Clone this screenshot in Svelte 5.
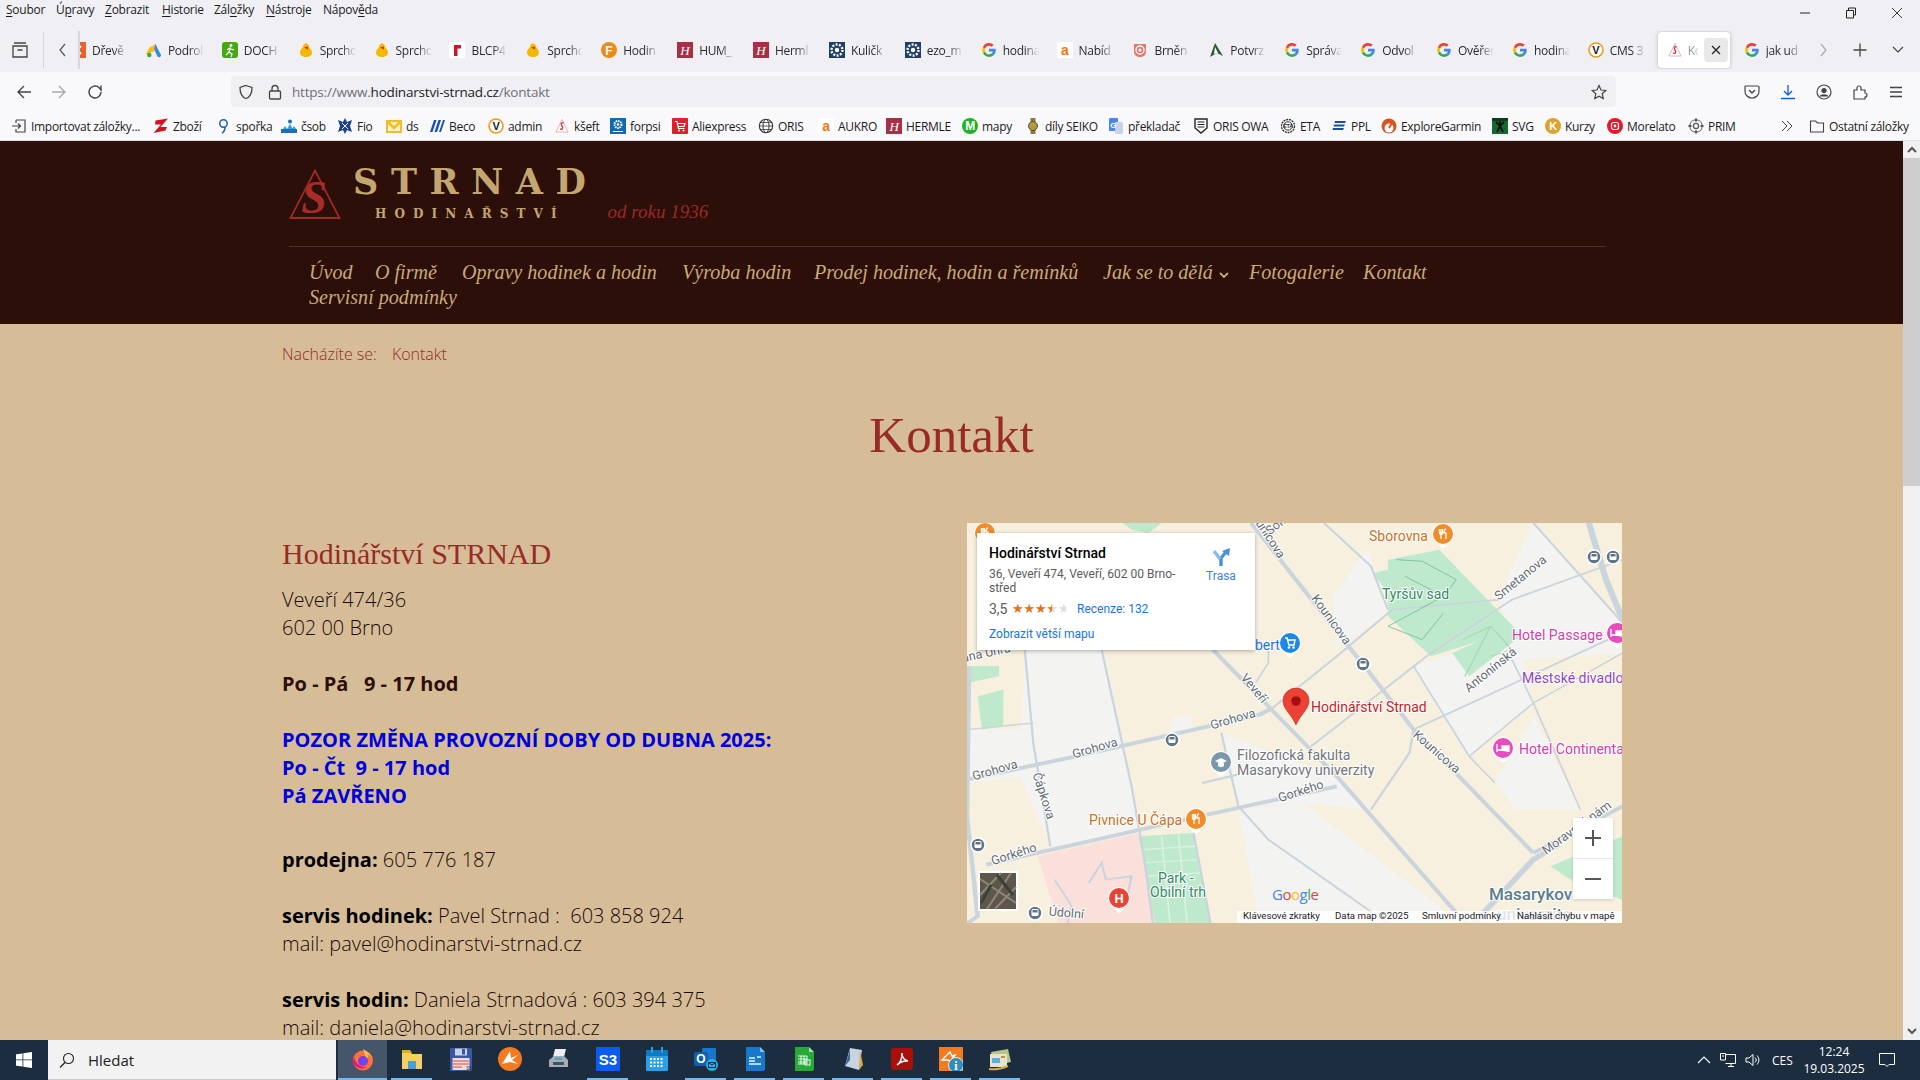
<script>
  const icons = {
    drev: '<rect width="16" height="16" fill="#e8622a"/><path d="M3 4l8 8M11 4l-8 8" stroke="#fff" stroke-width="2"/>',
    ads: '<path d="M9.500 2L15 13a2 2 0 0 1-3.500 1.600L6.500 4.500z" fill="#3c8bd9"/><path d="M6.500 4.500l3-2.500-2 8-3 0z" fill="#fabb05"/><path d="M6 5L1.500 12.500" stroke="#fabb05" stroke-width="3.400"/><circle cx="3.300" cy="13" r="2.200" fill="#34a853"/>',
    doch: '<rect width="16" height="16" rx="3" fill="#46a80f"/><circle cx="9" cy="3.500" r="1.400" fill="#fff"/><path d="M8.500 5.500L7 10l3 2 -1 3M7.500 6L5 8M9 7l3 1M7 10l-3 3" stroke="#fff" stroke-width="1.300" fill="none"/>',
    duck: '<path d="M8 1c1.500 1 3 1.600 3 3.500 0 1.500 3 3 3 6 0 3-2.500 4.500-6 4.500s-6-1.500-6-4.500c0-3 3-4.500 3-6C5 2.600 6.500 2 8 1z" fill="#f5b800"/><path d="M6 5.500l4-1 0 3z" fill="#d22"/>',
    blcp: '<rect width="16" height="16" fill="#fff"/><path d="M5 14V3h7v3.500H8.500V14z" fill="#d0122a"/>',
    hodf: '<circle cx="8" cy="8" r="8" fill="#ee8a1c"/><text x="8" y="12.500" font-size="12" font-weight="700" text-anchor="middle" fill="#fff" font-family="Liberation Sans">F</text>',
    herm: '<rect width="16" height="16" fill="#a82f45"/><text x="8" y="12.500" font-size="13" font-style="italic" text-anchor="middle" fill="#fff" font-family="Liberation Serif">H</text>',
    kul: '<rect width="16" height="16" fill="#1f3f68"/><circle cx="8" cy="8" r="5.500" fill="none" stroke="#fff" stroke-width="2.400" stroke-dasharray="2 1.400"/><circle cx="8" cy="8" r="2.200" fill="#fff"/>',
    g: '<path d="M14.700 8.200c0-.500 0-1-.100-1.400H8v2.700h3.800c-.200.900-.700 1.600-1.400 2.100l2.200 1.700c1.300-1.200 2.100-3 2.100-5.100z" fill="#4285f4"/><path d="M8 15c1.900 0 3.400-.600 4.600-1.700l-2.200-1.700c-.600.400-1.400.700-2.400.700-1.800 0-3.400-1.200-3.900-2.900L1.800 11.100C3 13.400 5.300 15 8 15z" fill="#34a853"/><path d="M4.100 9.400a4 4 0 0 1 0-2.800L1.800 4.900a7 7 0 0 0 0 6.200z" fill="#fbbc05"/><path d="M8 3.700c1 0 2 .400 2.700 1l2-2A7 7 0 0 0 1.800 4.900l2.300 1.700C4.600 4.900 6.200 3.700 8 3.700z" fill="#ea4335"/>',
    aura: '<rect width="16" height="16" fill="#fff"/><text x="8" y="13" font-size="14" font-weight="700" text-anchor="middle" fill="#f07810" font-family="Liberation Sans">a</text>',
    brn: '<path d="M2 2h12v8c0 3-3 5-6 5s-6-2-6-5z" fill="#e8776b"/><circle cx="8" cy="8" r="4" fill="none" stroke="#fff" stroke-width="1.400"/><circle cx="8" cy="8" r="1.600" fill="#fff"/>',
    pot: '<path d="M7 1l8 13-6-3-7 4z" fill="#2f5b33"/><path d="M7 5l3 6-4 1z" fill="#fff"/>',
    v: '<circle cx="8" cy="8" r="7" fill="#fff" stroke="#ee9a1c" stroke-width="1.600"/><text x="8" y="12" font-size="11" font-weight="700" text-anchor="middle" fill="#222" font-family="Liberation Sans">V</text>',
    str: '<path d="M8 1.500l6 12.500H2z" fill="#fff" stroke="#e8a0a2" stroke-width=".8"/><path d="M9.500 5c-2-1-3 1-1.500 3s.500 4-2 3" fill="none" stroke="#c8484a" stroke-width="1.500"/>',
    imp: '<path d="M5 2h9v12H5v-3M5 5V2M1 8h8M7 5.500L9.500 8 7 10.500" fill="none" stroke="#444" stroke-width="1.200"/>',
    z: '<path d="M2.500 2.500L15 .5 7.500 9H14l-1.500 3.500L.5 15 8 6.500H2z" fill="#d0121c"/>',
    pin: '<circle cx="7.500" cy="5.500" r="3.700" fill="none" stroke="#1c5fb0" stroke-width="1.500"/><path d="M9 9c0 3-1 5-3 6" fill="none" stroke="#1c5fb0" stroke-width="1.500"/>',
    csob: '<path d="M0 11h16v4H0z" fill="#1d70b8"/><path d="M2 11l2-3 2 3M6 11l3-5 3 5M11 11l2-3 2 3" fill="#39a0dc"/><circle cx="9" cy="3.500" r="2" fill="#1d70b8"/>',
    fio: '<path d="M8 0l2 4 5-2-2 6 2 6-5-2-2 4-2-4-5 2 2-6-2-6 5 2z" fill="#1c3f94"/><path d="M5 5l6 6M11 5l-6 6" stroke="#fff"/>',
    ds: '<path d="M1 3h14v11H1z" fill="#fff2c8" stroke="#f4bd27" stroke-width="2"/><path d="M1 3l7 7 7-7" fill="none" stroke="#f4bd27" stroke-width="2.600"/>',
    beco: '<path d="M1 14L5 2h2.500L3.500 14zM5.500 14L9.500 2H12L8 14zM10 14l4-12h2l-4 12z" fill="#1b4fb0"/>',
    forp: '<rect width="16" height="16" fill="#1268b8"/><circle cx="8" cy="6.500" r="3.500" fill="none" stroke="#fff" stroke-width="2" stroke-dasharray="1.500 .8"/><circle cx="8" cy="6.500" r="1.200" fill="#fff"/><path d="M3 13.500h10" stroke="#fff"/>',
    ali: '<rect width="16" height="16" rx="1" fill="#d8232a"/><path d="M3 3.500h2l1.500 7h6M6 5.500h7l-1 3H6.500" fill="none" stroke="#fff" stroke-width="1.200"/><circle cx="7" cy="12.500" r="1" fill="#fff"/><circle cx="11.500" cy="12.500" r="1" fill="#fff"/>',
    globe: '<circle cx="8" cy="8" r="6.700" fill="none" stroke="#3a3a3a" stroke-width="1.100"/><ellipse cx="8" cy="8" rx="3" ry="6.700" fill="none" stroke="#3a3a3a"/><path d="M1.500 8h13M2.500 4.500h11M2.500 11.500h11" stroke="#3a3a3a" stroke-width=".8"/>',
    mapy: '<circle cx="8" cy="8" r="8" fill="#1cb324"/><text x="8" y="12.300" font-size="12" font-weight="700" text-anchor="middle" fill="#fff" font-family="Liberation Sans">M</text>',
    watch: '<rect x="5.500" y="0" width="5" height="16" fill="#8a7a3c"/><circle cx="8" cy="8" r="4.500" fill="#b09a48" stroke="#5c5020"/>',
    trans: '<rect x="1" y="0" width="9" height="13" rx="1" fill="#4a87ec"/><rect x="7" y="4" width="8" height="12" rx="1" fill="#c4d4ee"/><text x="5.200" y="9.500" font-size="8" font-weight="700" text-anchor="middle" fill="#fff" font-family="Liberation Sans">G</text>',
    owa: '<path d="M2 1h12v9l-6 5-6-5z" fill="#fff" stroke="#222" stroke-width="1.400"/><path d="M4.500 4h7M4.500 6.500h7M4.500 9h7" stroke="#222" stroke-width="1.200"/>',
    eta: '<circle cx="8" cy="8" r="6.500" fill="#fff" stroke="#333" stroke-width="1.400" stroke-dasharray="2 .8"/><circle cx="8" cy="8" r="4.200" fill="none" stroke="#333"/><text x="8" y="10" font-size="5.500" font-weight="700" text-anchor="middle" fill="#333" font-family="Liberation Sans">ETA</text>',
    ppl: '<path d="M4 3h11l-1 2H3.500zM3 6.500h11l-1 2H2.500zM2 10h11l-1 2H1.500z" fill="#1a4f9e"/>',
    garm: '<circle cx="8" cy="8" r="7.500" fill="#d9531e"/><circle cx="8" cy="10" r="4.500" fill="#fff"/><path d="M8 10l3-5" stroke="#d9531e" stroke-width="2"/>',
    svg: '<rect width="16" height="16" fill="#136b32"/><path d="M8 2.500v5M4 4l4 4 4-4M8 8l-3 6M8 8l3 6" stroke="#111" stroke-width="1.800" fill="none"/><rect x="0" y="0" width="16" height="3" fill="#0c3a1c"/>',
    kur: '<circle cx="8" cy="8" r="8" fill="#d9a431"/><text x="8" y="12.300" font-size="11" font-weight="700" text-anchor="middle" fill="#fff" font-family="Liberation Sans">K</text>',
    mor: '<circle cx="8" cy="8" r="8" fill="#e4192b"/><rect x="4.500" y="4.500" width="7" height="7" rx="2" fill="none" stroke="#fff" stroke-width="1.200"/><circle cx="8" cy="8" r="1.400" fill="#fff"/>',
    prim: '<circle cx="8" cy="8" r="2.600" fill="none" stroke="#555" stroke-width="1.200"/><path d="M8 .5v3M8 12.500v3M.5 8h3M12.500 8h3" stroke="#555" stroke-width="2"/><rect x="2" y="2" width="12" height="12" rx="5" fill="none" stroke="#555" stroke-width=".9"/>'
  }

  const menu = [
    { t: 'Soubor', u: 0, w: 50 }, { t: 'Úpravy', u: 1, w: 49 }, { t: 'Zobrazit', u: 0, w: 57 },
    { t: 'Historie', u: 0, w: 52 }, { t: 'Záložky', u: 3, w: 52 }, { t: 'Nástroje', u: 0, w: 57 }, { t: 'Nápověda', u: 5, w: 60 }
  ]

  const tabs = [
    ['drev', 'Dřevě'], ['ads', 'Podrol'], ['doch', 'DOCH'], ['duck', 'Sprcho'], ['duck', 'Sprcho'],
    ['blcp', 'BLCP4'], ['duck', 'Sprcho'], ['hodf', 'Hodin'], ['herm', 'HUM_'], ['herm', 'Herml'],
    ['kul', 'Kuličk'], ['kul', 'ezo_m'], ['g', 'hodina'], ['aura', 'Nabíd'], ['brn', 'Brněn'],
    ['pot', 'Potvrz'], ['g', 'Správa'], ['g', 'Odvol'], ['g', 'Ověřen'], ['g', 'hodina'], ['v', 'CMS 3']
  ]

  const bookmarks = [
    ['imp', 'Importovat záložky...', 142], ['z', 'Zboží', 63], ['pin', 'spořka', 65], ['csob', 'čsob', 56], ['fio', 'Fio', 49],
    ['ds', 'ds', 43], ['beco', 'Beco', 59], ['v', 'admin', 66], ['str', 'kšeft', 56], ['forp', 'forpsi', 62],
    ['ali', 'Aliexpress', 86], ['globe', 'ORIS', 60], ['aura', 'AUKRO', 68], ['herm', 'HERMLE', 76], ['mapy', 'mapy', 63],
    ['watch', 'díly SEIKO', 83], ['trans', 'překladač', 85], ['owa', 'ORIS OWA', 87], ['eta', 'ETA', 51], ['ppl', 'PPL', 50],
    ['garm', 'ExploreGarmin', 111], ['svg', 'SVG', 53], ['kur', 'Kurzy', 62], ['mor', 'Morelato', 81], ['prim', 'PRIM', 60]
  ]

  const navItems = [
    ['Úvod', 66], ['O firmě', 87], ['Opravy hodinek a hodin', 220], ['Výroba hodin', 132],
    ['Prodej hodinek, hodin a řemínků', 289], ['Jak se to dělá', 146], ['Fotogalerie', 114], ['Kontakt', 70], ['Servisní podmínky', 200]
  ]

  const apps = [
    { k: 'ff', on: 1, cur: 1 }, { k: 'folder', on: 1 }, { k: 'floppy' }, { k: 'avast' }, { k: 'printer' }, { k: 's3', on: 1 },
    { k: 'cal' }, { k: 'outlook', on: 1 }, { k: 'writer', on: 1 }, { k: 'calc', on: 1 }, { k: 'note', on: 1 }, { k: 'pdf', on: 1 },
    { k: 'avinfo', on: 1 }, { k: 'mailer', on: 1 }
  ]

  const appIcons = {
    ff: '<circle cx="12" cy="13.500" r="10" fill="#ff7139"/><path d="M12 2c3 2 8 4 9.500 11-1-3-3-5-5-6 1 2 .5 4-1 5z" fill="#ffbd4f"/><circle cx="12" cy="14" r="5" fill="#7542e5"/><path d="M3 9c1 7 6 12 13 11-5 3-12 1-14-5z" fill="#e31587"/>',
    folder: '<path d="M2 5h8l2 2h10v15H2z" fill="#f7cf6a"/><path d="M2 3h8l2 3H2z" fill="#e0a82e"/><path d="M8 14h8v8H8z" fill="#4a9fd8"/>',
    floppy: '<rect x="1" y="1" width="22" height="23" rx="1" fill="#3857a5"/><rect x="6" y="1.500" width="12" height="7" fill="#c9d3ea"/><rect x="13" y="2" width="3" height="5.500" fill="#3857a5"/><rect x="3.500" y="11" width="17" height="12" fill="#f1dada"/><path d="M4 14h16M4 17h16M4 20h9" stroke="#d84a4a"/><text x="17" y="22.500" font-size="5" fill="#222" font-family="Liberation Sans">31</text>',
    avast: '<circle cx="12" cy="12" r="12" fill="#f37a1f"/><path d="M4 17L12 4l1 7 7-3-6 5 6 4-8-2z" fill="#fff"/>',
    printer: '<path d="M8 2h11l-2 8H6z" fill="#eee"/><path d="M2 13l5-4h10l4 4v7H2z" fill="#a4aeb8"/><rect x="6" y="15" width="11" height="3" fill="#46525e"/><rect x="8" y="10.500" width="7" height="2.500" fill="#5da0c8"/>',
    s3: '<rect width="24" height="24" fill="#0a5cf5"/><text x="12" y="17.500" font-size="15" font-weight="700" text-anchor="middle" fill="#fff" font-family="Liberation Sans">S3</text>',
    cal: '<rect x="1" y="3" width="22" height="21" rx="1" fill="#2aa0e8"/><rect x="1" y="3" width="22" height="6" fill="#0e7ac4"/><path d="M7 0v6M17 0v6" stroke="#2aa0e8" stroke-width="2"/><path d="M5 12h14M5 15.500h14M5 19h14" stroke="#fff" stroke-width="1.800" stroke-dasharray="2 1.500"/>',
    outlook: '<rect x="8" y="1" width="14" height="15" rx="1" fill="#1777cb"/><rect x="0" y="5" width="14" height="14" rx="2" fill="#0f5fb0"/><text x="7" y="16" font-size="12" font-weight="700" text-anchor="middle" fill="#fff" font-family="Liberation Sans">O</text><circle cx="18" cy="18" r="6" fill="#27b0e4"/><rect x="14.500" y="15.500" width="7" height="5" fill="none" stroke="#103050"/><path d="M14.500 15.500l3.500 2.500 3.500-2.500" fill="none" stroke="#103050"/>',
    writer: '<path d="M3 0h14l5 5v17a2 2 0 0 1-2 2H3z" fill="#1878cc"/><path d="M17 0l5 5h-5z" fill="#7dc0ee"/><path d="M6 11h6M6 14h6M14 10h4M6 17h12" stroke="#e8f2fb" stroke-width="1.400"/>',
    calc: '<path d="M3 0h14l5 5v17a2 2 0 0 1-2 2H3z" fill="#27a838"/><path d="M17 0l5 5h-5z" fill="#a0e0a0"/><path d="M6 9h9v8H6M6 12h9M6 15h9M9 9v8M12 9v8" stroke="#e8fae8" fill="none"/><rect x="13" y="13" width="5" height="5" fill="none" stroke="#e8fae8"/>',
    note: '<path d="M9 1l12 2-3 20L4 19z" fill="#c8d4e0"/><path d="M4 19L9 3v10z" fill="#3e6a8c"/><path d="M19 3l3 15-4 5z" fill="#d8a94a"/>',
    pdf: '<rect x="1" y="1" width="22" height="22" rx="3" fill="#ab0f0a"/><path d="M7 18c3-2 5-7 5-12 0 5 2 7 6 8-5-.5-8 1-11 4z" fill="none" stroke="#fff" stroke-width="1.500"/>',
    avinfo: '<rect width="24" height="24" fill="#f37a1f"/><path d="M3 13l8-8 2 4 3-1-4 6-4-1z" fill="none" stroke="#fff" stroke-width="1.400"/><circle cx="17" cy="18" r="7.500" fill="#2b8fc4" stroke="#fff" stroke-width=".8"/><text x="17" y="23" font-size="12" font-weight="700" text-anchor="middle" fill="#fff" font-family="Liberation Serif">i</text>',
    mailer: '<path d="M3 5l17-3 3 13-17 4z" fill="#b9c48a"/><rect x="2" y="7" width="17" height="13" fill="#e8e4c8"/><rect x="4" y="11" width="8" height="5" fill="#5ab0e0"/><path d="M13 10h4" stroke="#c84" stroke-width="2"/><path d="M1 22c6 1 12 0 19-3" stroke="#d8a94a" stroke-width="2" fill="none"/>'
  }

  const roads = [
    { p: '590,400 720,570 880,780 1160,1190 1190,1230', w: 5 },
    { p: '680,20 760,150 945,450 1060,640 1340,1010', w: 5 },
    { p: '15,790 270,720 700,595 730,575', w: 5.500 },
    { p: '60,1045 560,900 880,810', w: 5.500 },
    { p: '1340,1010 1549,870', w: 5 },
    { p: '1200,1222 1340,1030 1400,985', w: 7 },
    { p: '1470,20 1510,190 1549,310', w: 7 },
    { p: '720,585 880,420 1010,280 1260,250', w: 2.500 },
    { p: '820,690 1090,420 1290,250 1549,130', w: 2.500 },
    { p: '1060,640 1330,480 1549,350', w: 2.500 },
    { p: '960,880 1050,710 1060,640', w: 2.500 },
    { p: '1060,450 1190,720 1250,800', w: 2 },
    { p: '1290,430 1340,560 1450,880', w: 2 },
    { p: '1190,720 1340,560 1549,410', w: 2 },
    { p: '150,400 170,680 210,990', w: 2.500 },
    { p: '330,400 400,810 430,1030 450,1222', w: 2.500 },
    { p: '610,650 650,870 720,970 1000,1222', w: 2.500 },
    { p: '545,950 585,1222', w: 2.500 },
    { p: '15,640 170,620', w: 2 },
    { p: '20,450 15,900 40,1200 15,1222', w: 5 },
    { p: '565,800 650,775', w: 3 },
    { p: '850,20 960,150 1000,280', w: 2.500 },
    { p: '1340,20 1549,320', w: 2.500 },
    { p: '690,500 720,440 720,400', w: 2 },
    { p: '300,1100 330,1040 340,1090 400,1080 390,1140', w: 2.500 },
    { p: '220,1090 260,1170 250,1222', w: 2 }
  ]

  const labels = [
    { t: 'unicova', x: 300, y: 18, r: 57 }, { t: 'Sok', x: 311, y: 6, r: -38 }, { t: 'Kounicova', x: 361, y: 99, r: 54 },
    { t: 'Kounicova', x: 467, y: 232, r: 41 }, { t: 'Veveří', x: 284, y: 168, r: 50 }, { t: 'Grohova', x: 267, y: 200, r: -16 },
    { t: 'Grohova', x: 129, y: 229, r: -16 }, { t: 'Grohova', x: 29, y: 251, r: -16 }, { t: 'Gorkého', x: 335, y: 272, r: -18 },
    { t: 'Gorkého', x: 48, y: 335, r: -18 }, { t: 'Čápkova', x: 73, y: 274, r: 72 }, { t: 'Antonínská', x: 526, y: 150, r: -39 },
    { t: 'Smetanova', x: 556, y: 58, r: -39 }, { t: 'Moravské nám', x: 612, y: 308, r: -36 }, { t: 'ana Uhra', x: 20, y: 134, r: -12 },
    { t: 'Údolní', x: 99, y: 394, r: 5 }
  ]

  const places = [
    { t: 'Sborovna', x: 402, y: 18, c: '#c8701c' }, { t: 'Tyršův sad', x: 415, y: 76, c: '#2f8a5f' },
    { t: 'Hotel Passage', x: 545, y: 117, c: '#d440a8' }, { t: 'Městské divadlo', x: 555, y: 160, c: '#8f45c8' },
    { t: 'Hodinářství Strnad', x: 344, y: 189, c: '#c5221f' }, { t: 'Filozofická fakulta', x: 270, y: 237, c: '#70757a' },
    { t: 'Masarykovy univerzity', x: 270, y: 252, c: '#70757a' }, { t: 'Hotel Continental', x: 552, y: 231, c: '#d440a8' },
    { t: 'Pivnice U Čápa', x: 122, y: 302, c: '#c8701c' }, { t: 'Park -', x: 191, y: 360, c: '#2f8a5f' },
    { t: 'Obilní trh', x: 183, y: 374, c: '#2f8a5f' }, { t: 'bert', x: 288, y: 127, c: '#1a73e8' }
  ]

  const buses = [[396, 141], [205, 217], [11, 322], [68, 390], [627, 34], [646, 34]]

  const pins = [
    { x: 476, y: 11, c: '#f28c28', g: 'food' }, { x: 229, y: 296, c: '#f28c28', g: 'food' }, { x: 18, y: 10, c: '#f28c28', g: 'food' },
    { x: 323, y: 120, c: '#1e88e5', g: 'cart' }, { x: 536, y: 225, c: '#e84dc0', g: 'bed' }, { x: 650, y: 110, c: '#e84dc0', g: 'bed' },
    { x: 254, y: 239, c: '#7b98a8', g: 'uni' }, { x: 152, y: 375, c: '#ea4335', g: 'h' }
  ]
</script>

{#snippet fav(k)}
  <svg class="fav" viewBox="0 0 16 16">{@html icons[k]}</svg>
{/snippet}

<div class="screen">
  <div class="menubar">
    {#each menu as m}
      <span class="menu-item" style="width: {m.w}px">{m.t.slice(0, m.u)}<u>{m.t[m.u]}</u>{m.t.slice(m.u + 1)}</span>
    {/each}
    <div class="win-controls">
      <svg width="12" height="12" viewBox="0 0 12 12"><path d="M1 6h10" stroke="#222"/></svg>
      <svg width="12" height="12" viewBox="0 0 12 12"><path d="M3.500 3V1h7v7H8.500M1.500 3.500h7v7.500h-7z" fill="none" stroke="#222"/></svg>
      <svg width="12" height="12" viewBox="0 0 12 12"><path d="M1 1l10 10M11 1L1 11" stroke="#222" stroke-width=".9"/></svg>
    </div>
  </div>

  <div class="tabbar">
    <svg class="fxview" width="18" height="18" viewBox="0 0 18 18"><path d="M3 2h12M2 5h14v11H2zM6.500 9h5" fill="none" stroke="#444" stroke-width="1.300"/></svg>
    <div class="tab-sep"></div>
    <svg class="tab-scroll" width="10" height="16" viewBox="0 0 10 16"><path d="M8 2L3 8l5 6" fill="none" stroke="#555" stroke-width="1.200"/></svg>
    <div class="tabs">
      {#each tabs as t}
        <div class="tab">{@render fav(t[0])}<span class="tab-label">{t[1]}</span></div>
      {/each}
      <div class="tab active">
        {@render fav('str')}
        <span class="tab-label">Ko</span>
        <span class="tab-close"><svg width="10" height="10" viewBox="0 0 10 10"><path d="M1 1l8 8M9 1L1 9" stroke="#222" stroke-width="1.300"/></svg></span>
      </div>
      <div class="tab last">{@render fav('g')}<span class="tab-label">jak ud</span></div>
    </div>
    <svg class="tab-next" width="10" height="16" viewBox="0 0 10 16"><path d="M2 2l5 6-5 6" fill="none" stroke="#aaa" stroke-width="1.200"/></svg>
    <svg class="tab-plus" width="14" height="14" viewBox="0 0 14 14"><path d="M7 .5v13M.5 7h13" stroke="#444" stroke-width="1.300"/></svg>
    <svg class="tab-list" width="12" height="8" viewBox="0 0 12 8"><path d="M1 1l5 5 5-5" fill="none" stroke="#444" stroke-width="1.200"/></svg>
  </div>

  <div class="toolbar">
    <svg class="tb back" width="16" height="16" viewBox="0 0 16 16"><path d="M15 8H2M8 2L2 8l6 6" fill="none" stroke="#444" stroke-width="1.400"/></svg>
    <svg class="tb fwd" width="16" height="16" viewBox="0 0 16 16"><path d="M1 8h13M8 2l6 6-6 6" fill="none" stroke="#aaa" stroke-width="1.400"/></svg>
    <svg class="tb reload" width="16" height="16" viewBox="0 0 16 16"><path d="M14 8a6 6 0 1 1-2-4.500L14 6V1.500" fill="none" stroke="#444" stroke-width="1.400"/></svg>
    <div class="urlbar">
      <svg width="16" height="16" viewBox="0 0 16 16"><path d="M8 1.500l6 2c0 6-1.500 9.500-6 11-4.500-1.500-6-5-6-11z" fill="none" stroke="#444" stroke-width="1.300"/></svg>
      <svg class="lock" width="14" height="16" viewBox="0 0 14 16"><rect x="1.500" y="7" width="11" height="8" rx="1" fill="none" stroke="#444" stroke-width="1.300"/><path d="M4 7V4.500a3 3 0 0 1 6 0V7" fill="none" stroke="#444" stroke-width="1.300"/></svg>
      <span class="url">https://www.<b>hodinarstvi-strnad.cz</b>/kontakt</span>
      <svg class="star" width="16" height="16" viewBox="0 0 16 16"><path d="M8 1.500l2 4.500 4.800.5-3.600 3.200 1 4.800L8 12.200 3.800 14.500l1-4.800L1.200 6.500 6 6z" fill="none" stroke="#444" stroke-width="1.200"/></svg>
    </div>
    <div class="tb-right">
      <svg width="16" height="16" viewBox="0 0 16 16"><path d="M2 2h12a1 1 0 0 1 1 1v4c0 4-3 7-7 7s-7-3-7-7V3a1 1 0 0 1 1-1z" fill="none" stroke="#444" stroke-width="1.200"/><path d="M5 6l3 3 3-3" fill="none" stroke="#444" stroke-width="1.400"/></svg>
      <svg width="16" height="16" viewBox="0 0 16 16"><path d="M8 1v10M4 7l4 4 4-4M1 14.500h14" fill="none" stroke="#0a60d8" stroke-width="1.300"/></svg>
      <svg width="16" height="16" viewBox="0 0 16 16"><circle cx="8" cy="8" r="7" fill="none" stroke="#444" stroke-width="1.200"/><circle cx="8" cy="6.500" r="2.600" fill="#444"/><path d="M3.500 12.500c1-3 8-3 9 0" fill="#444"/></svg>
      <svg width="16" height="16" viewBox="0 0 16 16"><path d="M2 6h3V4a2 2 0 0 1 4 0v2h4v3a2 2 0 0 1 0 4v2H2z" fill="none" stroke="#444" stroke-width="1.200"/></svg>
      <svg width="16" height="16" viewBox="0 0 16 16"><path d="M2 3.500h12M2 8h12M2 12.500h12" stroke="#444" stroke-width="1.300"/></svg>
    </div>
  </div>

  <div class="bookmarks">
    {#each bookmarks as b}
      <div class="bm" style="width: {b[2]}px">{@render fav(b[0])}<span>{b[1]}</span></div>
    {/each}
    <svg class="bm-more" width="12" height="12" viewBox="0 0 12 12"><path d="M1 1l5 5-5 5M6 1l5 5-5 5" fill="none" stroke="#444"/></svg>
    <div class="bm bm-other">
      <svg class="fav" viewBox="0 0 16 16"><path d="M1.500 3h5l2 2h6v9h-13z" fill="none" stroke="#444" stroke-width="1.100"/></svg>
      <span>Ostatní záložky</span>
    </div>
  </div>

  <div class="window">
    <div class="viewport">
      <header class="site-head">
        <div class="logo">
          <svg class="mark" width="52" height="50" viewBox="0 0 52 50">
            <path d="M26 1.500L50.500 49H1.500z" fill="none" stroke="#9c2a28" stroke-width="1.800"/>
            <text x="25" y="44" font-size="46" font-weight="700" font-style="italic" text-anchor="middle" fill="#a82c2a" font-family="Liberation Serif">S</text>
          </svg>
          <div class="wordmark">
            <div class="brand">STRNAD</div>
            <div class="brand-sub">HODINAŘSTVÍ</div>
          </div>
          <div class="since">od roku 1936</div>
        </div>
        <nav class="nav">
          {#each navItems as item}
            <span class="nav-item" style="width: {item[1]}px">{item[0]}{#if item[0] === 'Jak se to dělá'}<svg width="10" height="7" viewBox="0 0 10 7"><path d="M1 1l4 4 4-4" fill="none" stroke="#c9ab79" stroke-width="1.800"/></svg>{/if}</span>
          {/each}
        </nav>
      </header>

      <main class="content">
        <div class="crumbs"><span>Nacházíte se:</span><span>Kontakt</span></div>
        <h1>Kontakt</h1>
        <div class="columns">
          <section class="info">
            <h2>Hodinářství STRNAD</h2>
            <p>Veveří 474/36<br>602 00 Brno</p>
            <p class="hours"><strong>Po - Pá &nbsp; 9 - 17 hod</strong></p>
            <p class="notice"><strong>POZOR ZMĚNA PROVOZNÍ DOBY OD DUBNA 2025:<br>Po - Čt &nbsp;9 - 17 hod<br>Pá ZAVŘENO</strong></p>
            <p class="phone"><strong>prodejna:</strong> 605 776 187</p>
            <p><strong>servis hodinek:</strong> Pavel Strnad : &nbsp;603 858 924<br>mail: pavel@hodinarstvi-strnad.cz</p>
            <p><strong>servis hodin:</strong> Daniela Strnadová : 603 394 375<br>mail: daniela@hodinarstvi-strnad.cz</p>
          </section>

          <div class="map">
            <svg width="655" height="400" viewBox="0 0 655 400">
              <rect width="655" height="400" fill="#f7f0df"/>
              <g transform="translate(-6.400,-6.700) scale(.4274,.3333)">
                <g fill="#f3f3f2">
                  <path d="M150 400H335L420 950 210 990 140 780z"/>
                  <path d="M15 640H170L150 780 15 800z"/>
                  <path d="M610 650L870 780 960 880 800 860 650 870z"/>
                  <path d="M650 880L800 860 1130 1180 1150 1222H700z"/>
                  <path d="M1060 450L1300 350 1340 560 1190 720z"/>
                  <path d="M1340 20L1549 320V410L1300 430 1260 250 1300 130z"/>
                  <path d="M870 240L950 100 1010 280 880 400z"/>
                  <path d="M1250 800L1340 600 1450 880 1300 880z"/>
                  <path d="M500 600L540 600 540 640 490 650z"/>
                </g>
                <g fill="#bfe9cd">
                  <path d="M1000 130L1120 100 1300 340 1100 420 1000 300z"/>
                  <path d="M1150 410L1290 330 1310 360 1190 480z"/>
                  <path d="M415 960L545 950 585 1222H450z"/>
                  <path d="M40 540L100 520 100 630 50 640z"/>
                  <path d="M15 450H90V480L15 500z"/>
                  <path d="M380 20H470L440 50 400 40z"/>
                  <path d="M1380 1050L1549 960V1150L1450 1110z"/>
                  <path d="M965 170L1000 160 1020 210 990 215z"/>
                </g>
                <path d="M180 1020L415 950 455 1222H230z" fill="#fadfda"/>
                <path d="M425 1000L550 990M430 1040L555 1030M435 1080L560 1070M470 960L490 1222M510 955L530 1222" fill="none" stroke="#d8f2e0" stroke-width="4"/>
                {#each roads as r}
                  <polyline points={r.p} fill="none" stroke="#c9d4dc" stroke-width={r.w * 2.100}/>
                {/each}
                <path d="M1020 130L1080 135 1160 190 1130 240 1000 330 1080 370 1130 290M1040 180L1130 240" fill="none" stroke="#6cb88c" stroke-width="2"/>
                <path d="M1175 370L1240 330 1290 400 1240 420M1240 330L1180 480" fill="none" stroke="#a8d6b8" stroke-width="3"/>
              </g>

              {#each labels as l}
                <text class="street" transform="translate({l.x} {l.y}) rotate({l.r})" text-anchor="middle">{l.t}</text>
              {/each}
              {#each places as p}
                <text class="place" x={p.x} y={p.y} fill={p.c}>{p.t}</text>
              {/each}
              <text class="uni" x="522" y="377">Masarykov</text>
              <text class="uni" x="530" y="397">univerzita</text>

              {#each buses as b}
                <g transform="translate({b[0]} {b[1]})">
                  <circle r="7" fill="#5f7586" stroke="#fff" stroke-width="1.500"/>
                  <rect x="-3.500" y="-4" width="7" height="7" rx="1.500" fill="#fff"/>
                  <rect x="-2.500" y="-3" width="5" height="2.500" fill="#5f7586"/>
                </g>
              {/each}

              {#each pins as p}
                <g transform="translate({p.x} {p.y})">
                  <path d="M0 15l-5-4h10z" fill="#fff"/>
                  <circle r="11" fill="#fff"/>
                  <circle r="10" fill={p.c}/>
                  {#if p.g === 'food'}
                    <path d="M-3.500-5v4a1.500 1.500 0 0 0 3 0v-4M-2-5v10M3-5c-1.500 0-2 2-2 4h2v6" fill="none" stroke="#fff" stroke-width="1.300"/>
                  {:else if p.g === 'cart'}
                    <path d="M-5-5h2l2 7h5l1-5H-2" fill="none" stroke="#fff" stroke-width="1.500"/><circle cx="-1" cy="4.500" r="1.300" fill="#fff"/><circle cx="3.500" cy="4.500" r="1.300" fill="#fff"/>
                  {:else if p.g === 'bed'}
                    <path d="M-6-4v8M-6 2H6v2M6 2V-2H-1v4" fill="#fff" stroke="#fff" stroke-width="1.300"/>
                  {:else if p.g === 'uni'}
                    <path d="M-6-1L0-4 6-1 0 2z" fill="#fff"/><path d="M-3 1v3c2 1.500 4 1.500 6 0V1" fill="#fff"/>
                  {:else}
                    <text y="4.500" font-size="13" font-weight="700" text-anchor="middle" fill="#fff" font-family="Roboto">H</text>
                  {/if}
                </g>
              {/each}

              <path d="M329 202C325 192 316 186 316 178a13 13 0 1 1 26 0C342 186 333 192 329 202z" fill="#ea4335" stroke="#c5221f" stroke-width=".6"/>
              <circle cx="329" cy="178" r="4.800" fill="#a50e0e"/>

              <text class="google" x="305" y="377"><tspan fill="#4285f4">G</tspan><tspan fill="#ea4335">o</tspan><tspan fill="#fbbc05">o</tspan><tspan fill="#4285f4">g</tspan><tspan fill="#34a853">l</tspan><tspan fill="#ea4335">e</tspan></text>
              <rect x="270" y="388" width="385" height="12" fill="#fff" opacity=".8"/>
              <text class="terms" x="276" y="396">Klávesové zkratky</text>
              <text class="terms" x="368" y="396">Data map ©2025</text>
              <text class="terms" x="455" y="396">Smluvní podmínky</text>
              <text class="terms" x="550" y="396">Nahlásit chybu v mapě</text>

              <rect x="11" y="348" width="40" height="40" rx="1" fill="#fff"/>
              <rect x="13" y="350" width="36" height="36" fill="#5d564a"/>
              <path d="M13 356L49 380M20 386L44 350M13 372L34 350M28 386L49 364" stroke="#8f8778" stroke-width="2"/>
              <path d="M14 380L24 362M30 352L46 372" stroke="#39423a" stroke-width="3"/>
            </svg>

            <div class="map-card">
              <div class="card-main">
                <div class="card-title">Hodinářství Strnad</div>
                <div class="card-addr">36, Veveří 474, Veveří, 602 00 Brno-střed</div>
                <div class="card-rating">
                  <span class="score">3,5</span>
                  <span class="stars">★★★★★<i>★★★★★</i></span>
                  <a href="#reviews">Recenze: 132</a>
                </div>
                <a class="card-link" href="#map">Zobrazit větší mapu</a>
              </div>
              <div class="card-dir">
                <svg width="20" height="19" viewBox="0 0 20 19"><path d="M10 19v-8l5-6" fill="none" stroke="#4a90e2" stroke-width="3.400"/><path d="M11 4l8-3-1 8z" fill="#4a90e2"/><path d="M9 12L3 4" stroke="#8ab9ec" stroke-width="3.400"/></svg>
                <span>Trasa</span>
              </div>
            </div>

            <div class="map-zoom">
              <button aria-label="Přiblížit"><svg width="16" height="16" viewBox="0 0 16 16"><path d="M8 0v16M0 8h16" stroke="#555" stroke-width="2"/></svg></button>
              <button aria-label="Oddálit"><svg width="16" height="16" viewBox="0 0 16 16"><path d="M0 8h16" stroke="#555" stroke-width="2"/></svg></button>
            </div>
          </div>
        </div>
      </main>
    </div>

    <div class="scrollbar">
      <div class="sb-btn"><svg width="10" height="7" viewBox="0 0 10 7"><path d="M1 6l4-4 4 4" fill="none" stroke="#555" stroke-width="2"/></svg></div>
      <div class="sb-thumb"></div>
      <div class="sb-track"></div>
      <div class="sb-btn"><svg width="10" height="7" viewBox="0 0 10 7"><path d="M1 1l4 4 4-4" fill="none" stroke="#555" stroke-width="2"/></svg></div>
    </div>
  </div>

  <footer class="taskbar">
    <svg class="start" width="16" height="16" viewBox="0 0 16 16"><path d="M0 2.300L6.500 1.400V7.500H0zM7.300 1.300L16 0V7.500H7.300zM0 8.300H6.500V14.600L0 13.700zM7.300 8.300H16V16L7.300 14.700z" fill="#fff"/></svg>
    <div class="search">
      <svg width="16" height="16" viewBox="0 0 16 16"><circle cx="9.500" cy="6.500" r="5" fill="none" stroke="#222" stroke-width="1.100"/><path d="M6 10.500L1 15.500" stroke="#222" stroke-width="1.300"/></svg>
      <span>Hledat</span>
    </div>
    <div class="apps">
      {#each apps as a}
        <div class="app" class:on={a.on} class:cur={a.cur}>
          <svg width="24" height="24" viewBox="0 0 24 24">{@html appIcons[a.k]}</svg>
        </div>
      {/each}
    </div>
    <div class="tray">
      <svg width="14" height="8" viewBox="0 0 14 8"><path d="M1 7l6-6 6 6" fill="none" stroke="#fff" stroke-width="1.100"/></svg>
      <svg width="16" height="16" viewBox="0 0 16 16"><path d="M5.500 2.500H15.500V11.500H5.500M.5 1.500H5.500V8H.5zM8 14.500h6M11 11.500v3M2 4h2" fill="none" stroke="#fff"/></svg>
      <svg width="16" height="16" viewBox="0 0 16 16"><path d="M1 6h3l4-3.500v11L4 10H1zM10 5.500c1.500 1.500 1.500 3.500 0 5M12 3.500c2.500 3 2.500 6 0 9" fill="none" stroke="#fff"/></svg>
      <span class="lang">CES</span>
      <div class="clock"><span>12:24</span><span>19.03.2025</span></div>
      <svg class="notif" width="16" height="16" viewBox="0 0 16 16"><path d="M.5 1.500h15v11H10l-2 2-2-2H.5z" fill="none" stroke="#fff"/></svg>
    </div>
  </footer>
</div>

<style>
  :global(body) {
    margin: 0;
    overflow: hidden;
  }

  .screen {
    width: 1920px;
    height: 1080px;
    display: flex;
    flex-direction: column;
    overflow: hidden;
    background: #f0f0f4;
    font-family: "Open Sans", sans-serif;
    font-size: 12px;
    color: #1c1b22;
  }

  .menubar {
    height: 30px;
    flex: none;
    display: flex;
    padding-left: 6px;
    line-height: 20px;
    letter-spacing: -.25px;
  }

  .menu-item u {
    text-underline-offset: 2px;
  }

  .win-controls {
    margin-left: auto;
    display: flex;
    gap: 34px;
    padding: 7px 17px 0 0;
    height: 12px;
  }

  .tabbar {
    height: 42px;
    flex: none;
    display: flex;
    align-items: center;
    padding-bottom: 2px;
    box-sizing: border-box;
  }

  .fxview {
    margin-left: 11px;
    flex: none;
  }

  .tab-sep {
    width: 1px;
    height: 36px;
    background: #d4d4d8;
    margin-left: 14px;
    flex: none;
  }

  .tab-scroll {
    margin-left: 13px;
    flex: none;
  }

  .tabs {
    width: 1733px;
    margin-left: 11px;
    flex: none;
    display: flex;
    align-items: center;
    overflow: hidden;
    border-left: 2px solid #d8d8dc;
    box-sizing: border-box;
    height: 38px;
  }

  .tab {
    flex: 0 0 75.900px;
    display: flex;
    align-items: center;
    gap: 6px;
    height: 36px;
    box-sizing: border-box;
    overflow: hidden;
  }

  .tab:first-child {
    margin-left: -10px;
  }

  .tab-label {
    width: 36px;
    white-space: nowrap;
    overflow: hidden;
    color: #2b2a33;
    letter-spacing: -.3px;
    -webkit-mask-image: linear-gradient(to right, #000 60%, transparent);
    mask-image: linear-gradient(to right, #000 60%, transparent);
  }

  .tab.active {
    flex: 0 0 72px;
    margin: 0 14px 0 -6px;
    padding-left: 9px;
    background: #fff;
    border-radius: 4px;
    box-shadow: 0 0 4px rgba(0, 0, 0, .25);
    gap: 5px;
  }

  .tab.active .tab-label {
    width: 11px;
    opacity: .5;
  }

  .tab-close {
    width: 24px;
    height: 24px;
    flex: none;
    display: flex;
    align-items: center;
    justify-content: center;
    background: #e8e8e8;
    border-radius: 4px;
  }

  .tab-next {
    margin-left: 8px;
    flex: none;
  }

  .tab-plus {
    margin-left: 24px;
    flex: none;
  }

  .tab-list {
    margin-left: 25px;
    flex: none;
  }

  .toolbar {
    height: 39px;
    flex: none;
    display: flex;
    align-items: center;
    background: #f9f9fb;
    position: relative;
  }

  .tb {
    flex: none;
  }

  .back {
    margin-left: 16px;
  }

  .fwd {
    margin-left: 19px;
  }

  .reload {
    margin-left: 20px;
  }

  .urlbar {
    margin-left: 128px;
    width: 1385px;
    height: 31px;
    flex: none;
    background: #f0f0f4;
    border-radius: 4px;
    display: flex;
    align-items: center;
    box-sizing: border-box;
    padding: 0 9px 0 7px;
  }

  .lock {
    margin-left: 14px;
  }

  .url {
    margin-left: 10px;
    font-size: 13.500px;
    letter-spacing: -.2px;
    color: #6f6f75;
  }

  .url b {
    font-weight: 400;
    color: #1c1b22;
  }

  .star {
    margin-left: auto;
  }

  .tb-right {
    margin-left: 128px;
    display: flex;
    gap: 20px;
  }

  .bookmarks {
    height: 29px;
    flex: none;
    display: flex;
    align-items: center;
    padding: 1px 0 0 11px;
    box-sizing: border-box;
    background: #f9f9fb;
    letter-spacing: -.3px;
    white-space: nowrap;
  }

  .bm {
    display: flex;
    align-items: center;
    gap: 4px;
    flex: none;
  }

  .bm-more {
    margin-left: 33px;
    flex: none;
  }

  .bm-other {
    margin-left: 16px;
  }

  .fav {
    width: 16px;
    height: 16px;
    flex: none;
  }

  .window {
    flex: 1;
    min-height: 0;
    display: flex;
    border-top: 1px solid #e0e0e4;
  }

  .viewport {
    flex: 1;
    min-width: 0;
    overflow: hidden;
    background: #d6bd98;
  }

  .site-head {
    height: 183px;
    box-sizing: border-box;
    background: #2c0f08;
    padding: 28px 0 0 297px;
  }

  .logo {
    display: flex;
    height: 50px;
    margin-left: -8px;
    padding-bottom: 27px;
    border-bottom: 1px solid #4e3229;
    margin-right: 297px;
  }

  .mark {
    flex: none;
  }

  .wordmark {
    margin-left: 12px;
    color: #c4a670;
    font-family: "DejaVu Serif", serif;
    font-weight: 700;
    white-space: nowrap;
  }

  .brand {
    font-size: 35px;
    line-height: 26px;
    height: 26px;
    letter-spacing: 12.600px;
  }

  .brand-sub {
    margin: 13px 0 0 22px;
    font-size: 12px;
    line-height: 12px;
    letter-spacing: 8.100px;
  }

  .since {
    margin: 32px 0 0 9px;
    font-family: "Liberation Serif", serif;
    font-style: italic;
    font-size: 19px;
    line-height: 22px;
    color: #992b27;
    white-space: nowrap;
  }

  .nav {
    display: flex;
    flex-wrap: wrap;
    padding: 13px 400px 0 12px;
    font-family: "Liberation Serif", serif;
    font-style: italic;
    font-size: 20.100px;
    line-height: 25px;
    color: #c9ab79;
  }

  .nav-item svg {
    margin-left: 6px;
  }

  .content {
    padding: 18px 0 0 282px;
  }

  .crumbs {
    display: flex;
    gap: 15px;
    font-size: 16px;
    font-weight: 300;
    line-height: 24px;
    color: #992b27;
  }

  h1 {
    margin: 39px 0 0 -282px;
    text-align: center;
    font-family: "Liberation Serif", serif;
    font-weight: 400;
    font-size: 51px;
    line-height: 60px;
    color: #992b27;
    width: 1903px;
  }

  .columns {
    display: grid;
    grid-template-columns: 685px 655px;
    margin-top: 57.500px;
  }

  .info {
    padding-top: 14.500px;
    font-size: 20px;
    font-weight: 300;
    line-height: 28px;
    color: #2c0f08;
  }

  h2 {
    margin: 0 0 14.500px;
    font-family: "Liberation Serif", serif;
    font-weight: 400;
    font-size: 30px;
    line-height: 34px;
    color: #992b27;
  }

  p {
    margin: 0 0 28px;
    color: #1a0a06;
  }

  strong {
    font-weight: 700;
    color: #000;
  }

  .hours strong {
    color: #2c0f08;
  }

  .notice strong {
    color: #0000dc;
  }

  .notice {
    margin-bottom: 36px;
  }

  .map {
    position: relative;
    width: 655px;
    height: 400px;
    overflow: hidden;
    font-family: Roboto, sans-serif;
  }

  .map svg {
    display: block;
  }

  .street {
    font: 400 12.500px Roboto, sans-serif;
    fill: #5f6b72;
    stroke: #fff;
    stroke-width: 2px;
    paint-order: stroke;
  }

  .place {
    font: 400 14px Roboto, sans-serif;
    stroke: #fff;
    stroke-width: 2px;
    paint-order: stroke;
  }

  .uni {
    font: 500 17px Roboto, sans-serif;
    fill: #5a7d8c;
    stroke: #fff;
    stroke-width: 2px;
    paint-order: stroke;
  }

  .google {
    font: 500 15px "Open Sans", sans-serif;
    letter-spacing: -.5px;
  }

  .terms {
    font: 9.700px Roboto, sans-serif;
    fill: #222;
  }

  .map-card {
    position: absolute;
    left: 10px;
    top: 10px;
    width: 278px;
    height: 117px;
    box-sizing: border-box;
    background: #fff;
    box-shadow: 0 1px 4px rgba(0, 0, 0, .3);
    padding: 11px 0 0 12px;
    display: flex;
    font-size: 12px;
    color: #5b5b5b;
  }

  .card-main {
    width: 196px;
    flex: none;
  }

  .card-title {
    font-size: 14px;
    font-weight: 500;
    line-height: 18px;
    color: #000;
  }

  .card-addr {
    margin-top: 5px;
    line-height: 14px;
  }

  .card-rating {
    margin-top: 5px;
    display: flex;
    align-items: center;
    line-height: 18px;
  }

  .score {
    font-size: 14px;
    width: 19px;
  }

  .stars {
    margin-left: 4px;
    width: 54px;
    height: 18px;
    position: relative;
    overflow: hidden;
    color: #ddd;
    font-size: 12.800px;
    white-space: nowrap;
    font-family: "DejaVu Sans", sans-serif;
  }

  .stars i {
    position: absolute;
    left: 0;
    top: 0;
    width: 74%;
    overflow: hidden;
    font-style: normal;
    color: #e7711b;
  }

  .card-rating a {
    margin-left: 11px;
  }

  a {
    color: #1a73e8;
    text-decoration: none;
  }

  .card-link {
    display: block;
    margin-top: 9px;
    line-height: 14px;
  }

  .card-dir {
    margin-left: 21px;
    display: flex;
    flex-direction: column;
    align-items: center;
    width: 30px;
    padding-top: 3px;
    color: #3d82d8;
    line-height: 14px;
  }

  .card-dir svg {
    margin-bottom: 3px;
  }

  .map-zoom {
    position: absolute;
    left: 606px;
    top: 295px;
    width: 40px;
    height: 81px;
    background: #fff;
    display: flex;
    flex-direction: column;
    box-shadow: 0 1px 3px rgba(0, 0, 0, .15);
  }

  .map-zoom button {
    flex: 1;
    border: 0;
    background: none;
    padding: 0;
    display: flex;
    align-items: center;
    justify-content: center;
  }

  .map-zoom button:first-child {
    border-bottom: 1px solid #e6e6e6;
  }

  .scrollbar {
    width: 17px;
    flex: none;
    display: flex;
    flex-direction: column;
    background: #f0f0f0;
  }

  .sb-btn {
    height: 17px;
    display: flex;
    align-items: center;
    justify-content: center;
  }

  .sb-thumb {
    height: 328px;
    background: #cdcdcd;
  }

  .sb-track {
    flex: 1;
  }

  .taskbar {
    height: 40px;
    flex: none;
    background: #1c2d3f;
    display: flex;
    align-items: center;
    color: #fff;
  }

  .start {
    margin-left: 16px;
    flex: none;
  }

  .search {
    margin-left: 16px;
    width: 288px;
    height: 40px;
    flex: none;
    background: #f2f2f2;
    box-sizing: border-box;
    border-bottom: 1px solid #ccc;
    display: flex;
    align-items: center;
    padding-left: 11px;
    gap: 13px;
    color: #222;
    font-size: 15px;
  }

  .apps {
    margin-left: 2px;
    display: flex;
  }

  .app {
    width: 49px;
    height: 40px;
    box-sizing: border-box;
    display: flex;
    align-items: center;
    justify-content: center;
    padding-bottom: 2px;
  }

  .app.on {
    background: linear-gradient(#76b9ed, #76b9ed) center bottom / 41px 2px no-repeat;
  }

  .app.cur {
    background: linear-gradient(#76b9ed, #76b9ed) center bottom / 100% 2px no-repeat, #46566a;
  }

  .tray {
    margin-left: auto;
    display: flex;
    align-items: center;
    padding-right: 25px;
  }

  .tray svg {
    margin-right: 9px;
  }

  .lang {
    margin-left: 2px;
    width: 22px;
    font-size: 12px;
  }

  .clock {
    width: 80px;
    display: flex;
    flex-direction: column;
    align-items: center;
    font-size: 12px;
    line-height: 17px;
  }

  .tray .notif {
    margin: 0 0 0 5px;
  }
</style>
